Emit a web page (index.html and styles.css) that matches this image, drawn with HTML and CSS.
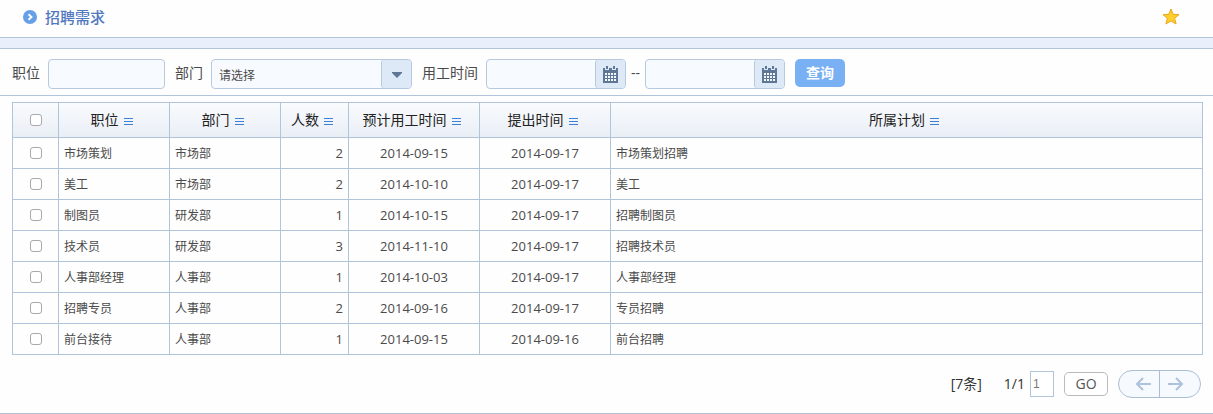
FILE: index.html
```html
<!DOCTYPE html>
<html lang="zh-CN">
<head>
    <meta charset="UTF-8">
    <meta name="viewport" content="width=device-width, initial-scale=1.0">
    <title>招聘需求</title>
    <link rel="stylesheet" href="styles.css">
</head>
<body>

    <!-- Icons shared by several controls -->
    <svg class="sprite" aria-hidden="true">
        <symbol id="calendar" viewBox="0 0 15 17">
            <path fill="#5f7797" d="M0 2H15V17H0Z"/>
            <path fill="#dde9f7" d="M2 1H6V4H2ZM9 1H13V4H9Z"/>
            <path fill="#5f7797" d="M3 0H5V3H3ZM10 0H12V3H10Z"/>
            <path stroke="#f4f8fd" stroke-width="2" stroke-dasharray="2 1" d="M2 8H13M2 11H13M2 14H13"/>
        </symbol>
        <symbol id="menu" viewBox="0 0 9 7">
            <path fill="#3c7fd6" d="M0 0H9V1H0ZM0 3H9V4H0ZM0 6H9V7H0Z"/>
        </symbol>
    </svg>

    <!-- Page title -->
    <header class="title-bar">
        <svg class="title-icon" viewBox="0 0 14 14" aria-hidden="true">
            <circle cx="7" cy="7" r="7" fill="#659fe6"/>
            <path d="M5.5 4.2L8.5 7L5.5 9.8" fill="none" stroke="#fff" stroke-width="1.9"/>
        </svg>
        <h1>招聘需求</h1>
        <button class="favorite" type="button" aria-label="收藏">
            <svg viewBox="0 0 18 17" aria-hidden="true">
                <path d="M9 1L11.2 6.3L17 6.7L12.6 10.3L14.1 16L9 12.9L3.9 16L5.4 10.3L1 6.7L6.8 6.3Z" fill="#ffd02c" stroke="#eba51f"/>
            </svg>
        </button>
    </header>
    <div class="strip"></div>

    <!-- Search form -->
    <form class="search">
        <div class="field">
            <label for="position">职位</label>
            <input class="text" type="text" id="position">
        </div>
        <div class="field">
            <label for="department">部门</label>
            <div class="select">
                <select id="department">
                    <option>请选择</option>
                    <option>市场部</option>
                    <option>研发部</option>
                    <option>人事部</option>
                </select>
                <span class="arrow"><svg viewBox="0 0 10 7"><path d="M0 1H10V2L5 7L0 2Z" fill="#5f7797"/></svg></span>
            </div>
        </div>
        <div class="field">
            <label for="dateFrom">用工时间</label>
            <div class="range">
                <div class="date">
                    <input type="text" id="dateFrom">
                    <button type="button" aria-label="开始日期"><svg><use href="#calendar"/></svg></button>
                </div>
                <span>--</span>
                <div class="date">
                    <input type="text" id="dateTo" aria-label="结束时间">
                    <button type="button" aria-label="结束日期"><svg><use href="#calendar"/></svg></button>
                </div>
            </div>
        </div>
        <button class="submit" type="submit">查询</button>
    </form>

    <!-- Result list -->
    <main class="list">
        <table>
            <colgroup>
                <col class="col-check">
                <col class="col-name">
                <col class="col-name">
                <col class="col-count">
                <col class="col-date">
                <col class="col-date">
                <col>
            </colgroup>
            <thead>
                <tr>
                    <th><input type="checkbox" aria-label="全选"></th>
                    <th>职位<svg><use href="#menu"/></svg></th>
                    <th>部门<svg><use href="#menu"/></svg></th>
                    <th>人数<svg><use href="#menu"/></svg></th>
                    <th>预计用工时间<svg><use href="#menu"/></svg></th>
                    <th>提出时间<svg><use href="#menu"/></svg></th>
                    <th>所属计划<svg><use href="#menu"/></svg></th>
                </tr>
            </thead>
            <tbody>
                <tr>
                    <td class="check"><input type="checkbox" aria-label="市场策划"></td>
                    <td>市场策划</td>
                    <td>市场部</td>
                    <td class="num">2</td>
                    <td class="day">2014-09-15</td>
                    <td class="day">2014-09-17</td>
                    <td>市场策划招聘</td>
                </tr>
                <tr>
                    <td class="check"><input type="checkbox" aria-label="美工"></td>
                    <td>美工</td>
                    <td>市场部</td>
                    <td class="num">2</td>
                    <td class="day">2014-10-10</td>
                    <td class="day">2014-09-17</td>
                    <td>美工</td>
                </tr>
                <tr>
                    <td class="check"><input type="checkbox" aria-label="制图员"></td>
                    <td>制图员</td>
                    <td>研发部</td>
                    <td class="num">1</td>
                    <td class="day">2014-10-15</td>
                    <td class="day">2014-09-17</td>
                    <td>招聘制图员</td>
                </tr>
                <tr>
                    <td class="check"><input type="checkbox" aria-label="技术员"></td>
                    <td>技术员</td>
                    <td>研发部</td>
                    <td class="num">3</td>
                    <td class="day">2014-11-10</td>
                    <td class="day">2014-09-17</td>
                    <td>招聘技术员</td>
                </tr>
                <tr>
                    <td class="check"><input type="checkbox" aria-label="人事部经理"></td>
                    <td>人事部经理</td>
                    <td>人事部</td>
                    <td class="num">1</td>
                    <td class="day">2014-10-03</td>
                    <td class="day">2014-09-17</td>
                    <td>人事部经理</td>
                </tr>
                <tr>
                    <td class="check"><input type="checkbox" aria-label="招聘专员"></td>
                    <td>招聘专员</td>
                    <td>人事部</td>
                    <td class="num">2</td>
                    <td class="day">2014-09-16</td>
                    <td class="day">2014-09-17</td>
                    <td>专员招聘</td>
                </tr>
                <tr>
                    <td class="check"><input type="checkbox" aria-label="前台接待"></td>
                    <td>前台接待</td>
                    <td>人事部</td>
                    <td class="num">1</td>
                    <td class="day">2014-09-15</td>
                    <td class="day">2014-09-16</td>
                    <td>前台招聘</td>
                </tr>
            </tbody>
        </table>
    </main>

    <!-- Pager -->
    <footer class="pager">
        <span class="total">[7条]</span>
        <label for="page">1/1</label>
        <input class="page" type="text" id="page" value="1">
        <button class="go" type="button">GO</button>
        <div class="pages">
            <button type="button" aria-label="上一页">
                <svg viewBox="0 0 16 14"><path d="M8 1L2 7L8 13M2 7H16" fill="none" stroke="#aec2dc" stroke-width="2"/></svg>
            </button>
            <button type="button" aria-label="下一页">
                <svg viewBox="0 0 16 14"><path d="M8 1L14 7L8 13M14 7H0" fill="none" stroke="#aec2dc" stroke-width="2"/></svg>
            </button>
        </div>
    </footer>

</body>
</html>
```
FILE: styles.css
```css
* {
    box-sizing: border-box;
}

body {
    margin: 0;
    font-family: "Open Sans", "Noto Sans CJK SC", sans-serif;
    font-size: 14px;
    line-height: 20px;
    color: #4a4a4a;
    background: #fefefe;
}

input,
select,
button {
    margin: 0;
    padding: 0;
    font: inherit;
    color: inherit;
}

button {
    cursor: pointer;
}

svg {
    display: block;
}

.sprite {
    display: none;
}

/* Page title */
.title-bar {
    display: flex;
    align-items: center;
    height: 38px;
    padding: 0 33px 4px 23px;
    border-bottom: 1px solid #b0c4da;
}
.title-icon {
    width: 14px;
    height: 14px;
}
.title-bar h1 {
    margin: 0 auto 0 8px;
    font-size: 15px;
    font-weight: 500;
    color: #5278c0;
}
.favorite {
    border: 0;
    background: none;
}
.favorite svg {
    width: 18px;
    height: 17px;
}
.strip {
    height: 11px;
    background: #e9f0fb;
    border-bottom: 1px solid #b0c4da;
}

/* Search form */
.search {
    display: flex;
    flex-wrap: wrap;
    gap: 10px;
    padding: 10px 12px 6px;
    border-bottom: 1px solid #b0c4da;
}
.field {
    display: flex;
    align-items: center;
    gap: 8px;
}
.field label,
.range span {
    padding-bottom: 2px;
}
.text,
.select,
.date {
    height: 30px;
    border: 1px solid #b8c9dd;
    border-radius: 4px;
    background: #f7fbff;
}
.text {
    width: 117px;
    padding: 0 8px;
}
.select {
    position: relative;
    width: 201px;
}
.select select {
    width: 100%;
    height: 100%;
    padding: 4px 38px 0 7px;
    border: 0;
    appearance: none;
    background: none;
    font-size: 12px;
}
.arrow {
    position: absolute;
    top: 0;
    right: 0;
    bottom: 0;
    display: flex;
    align-items: center;
    justify-content: center;
    width: 30px;
    border-left: 1px solid #b8c9dd;
    border-radius: 3px;
    background: #dde9f7;
    pointer-events: none;
}
.arrow svg {
    width: 10px;
    height: 7px;
}
.range {
    display: flex;
    align-items: center;
    gap: 5px;
}
.date {
    display: flex;
    width: 140px;
}
.date input {
    flex: 1;
    min-width: 0;
    padding: 0 8px;
    border: 0;
    background: none;
}
.date button {
    display: flex;
    align-items: center;
    justify-content: center;
    width: 30px;
    border: 0;
    border-left: 1px solid #b8c9dd;
    border-radius: 3px;
    background: #dde9f7;
}
.date svg {
    width: 15px;
    height: 17px;
}
.submit {
    width: 50px;
    height: 28px;
    border: 0;
    border-radius: 5px;
    background: #79b0f3;
    color: #fff;
    font-weight: bold;
}

/* Result list */
.list {
    padding: 6px 10px 0 12px;
}
table {
    width: 100%;
    table-layout: fixed;
    border-collapse: collapse;
    font-size: 12px;
}
.col-check {
    width: 46px;
}
.col-name {
    width: 111px;
}
.col-count {
    width: 68px;
}
.col-date {
    width: 131px;
}
th,
td {
    border: 1px solid #b0c4da;
}
thead {
    background: linear-gradient(#f9fbfd, #e9eef6);
}
th {
    height: 35px;
    padding: 0;
    font-size: 14px;
    font-weight: normal;
    color: #222;
}
th svg {
    display: inline-block;
    width: 9px;
    height: 7px;
    margin: 0 5px;
}
td {
    height: 31px;
    padding: 2px 5px 0;
}
.check,
.num,
.day {
    padding-top: 0;
}
.num {
    font-size: 13px;
    text-align: right;
}
.day {
    font-size: 13px;
    text-align: center;
}
input[type="checkbox"] {
    display: block;
    width: 12px;
    height: 12px;
    margin: 0 auto;
    appearance: none;
    border: 1px solid #a9a9a9;
    border-radius: 3px;
    background: #fff;
}
input[type="checkbox"]:checked {
    background: #659fe6;
}

/* Pager */
.pager {
    display: flex;
    align-items: center;
    justify-content: flex-end;
    padding: 15px 12px;
    border-bottom: 1px solid #b0c4da;
    color: #333;
}
.total {
    margin-right: 22px;
}
.page {
    width: 24px;
    height: 26px;
    margin: 0 10px 0 5px;
    padding: 0 2px;
    border: 1px solid #b0c4da;
    background: #fff;
    font-family: "Liberation Sans", Arial, sans-serif;
    font-size: 12px;
    color: #777;
}
.go {
    width: 44px;
    height: 24px;
    margin-right: 10px;
    border: 1px solid #bbb;
    border-radius: 5px;
    background: #fff;
    color: #555;
}
.pages {
    display: flex;
    width: 83px;
    height: 28px;
    border: 1px solid #a9bdd5;
    border-radius: 14px;
    background: #f6f9fe;
}
.pages button {
    display: flex;
    flex: 1;
    align-items: center;
    justify-content: flex-end;
    padding: 0 8px;
    border: 0;
    background: none;
}
.pages button + button {
    justify-content: flex-start;
    border-left: 1px solid #a9bdd5;
}
.pages svg {
    width: 16px;
    height: 14px;
}
```
